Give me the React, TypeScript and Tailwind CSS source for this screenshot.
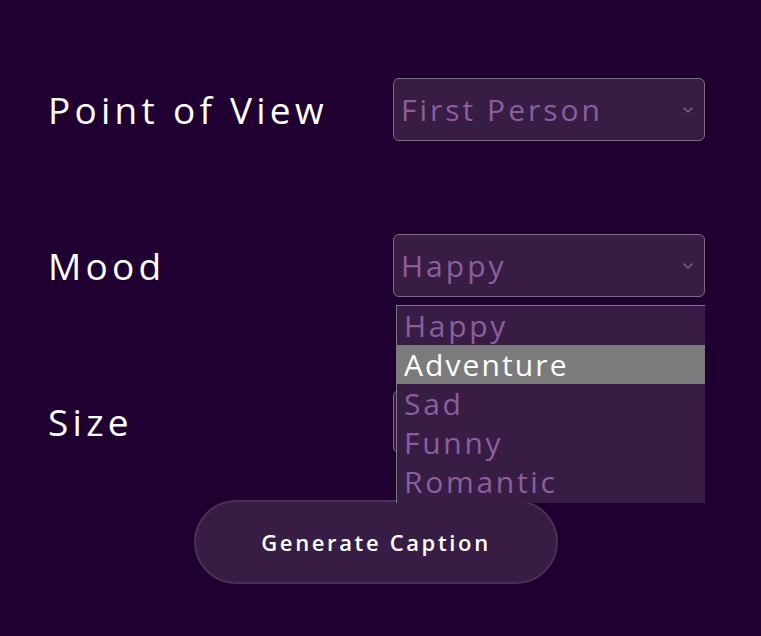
import { ChevronDown } from "lucide-react";

const font = { fontFamily: '"Open Sans", "DejaVu Sans", sans-serif' };

// the size select sits under the open mood list, so its value is not shown
const rows = [
  { label: "Point of View", value: "First Person" },
  { label: "Mood", value: "Happy" },
  { label: "Size", value: "" },
];

const moods = ["Happy", "Adventure", "Sad", "Funny", "Romantic"];

function FakeSelect({ value }: { value: string }) {
  return (
    <div className="flex h-[63px] w-[312px] items-center justify-between rounded-md border border-[#7a6f80] bg-[#371c44] pl-[7px] pr-[8px]">
      <span className="text-[30px] tracking-[0.1em] text-[#8b5e9e]">{value}</span>
      <ChevronDown className="h-[16px] w-[16px] text-[#8b5e9e]" strokeWidth={2} />
    </div>
  );
}

export default function App() {
  return (
    <div className="min-h-screen bg-[#1f0030] text-white" style={font}>
      <div className="relative w-[761px] pt-[78px]">
        <div className="flex flex-col gap-[93px]">
          {rows.map((r) => (
            <div key={r.label} className="flex items-center">
              <div className="w-[393px] pl-[48px] text-[37px] tracking-[0.115em]">{r.label}</div>
              <FakeSelect value={r.value} />
            </div>
          ))}
        </div>

        <div className="absolute left-[396px] top-[305px] w-[309px] border-l border-t border-[#7a7a7a] bg-[#371c44] pb-[2px]">
          {moods.map((m) => (
            <div
              key={m}
              className={
                m === "Adventure"
                  ? "h-[39px] bg-[#7b7b7b] pl-[7px] text-[30px] leading-[39px] tracking-[0.07em] text-white"
                  : "h-[39px] pl-[7px] text-[30px] leading-[39px] tracking-[0.09em] text-[#8b5e9e]"
              }
            >
              {m}
            </div>
          ))}
        </div>

        <div className="flex pl-[194px] pt-[47px]">
          <button className="h-[84px] w-[364px] rounded-full border-2 border-[#4a3055] bg-[#371c44] text-[22px] font-semibold tracking-[0.12em] text-white">
            Generate Caption
          </button>
        </div>
      </div>
    </div>
  );
}
